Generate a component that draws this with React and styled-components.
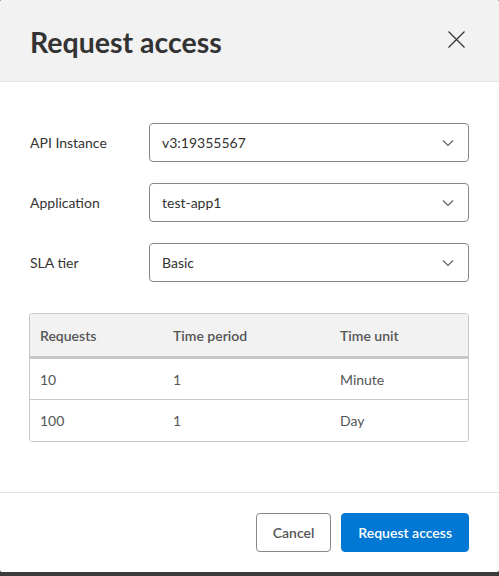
import React from "react";
import styled, { createGlobalStyle } from "styled-components";

const Global = createGlobalStyle`
  html, body { margin: 0; padding: 0; background: #3b3b3b; }
  body { font-family: Lato, "Open Sans", sans-serif; }
  * { box-sizing: border-box; }
`;

const Dialog = styled.div`
  width: 499px;
  height: 572px;
  background: #fff;
  border-radius: 2px;
  display: flex;
  flex-direction: column;
  overflow: hidden;
`;

const Header = styled.div`
  height: 82px;
  background: #f2f2f2;
  border-bottom: 1px solid #e1e1e1;
  display: flex;
  align-items: center;
  justify-content: space-between;
  padding: 0 34px 0 30px;
`;

const Title = styled.h2`
  margin: 0;
  margin-top: 2px;
  font-size: 28.5px;
  font-weight: 700;
  color: #333;
`;

const CloseButton = styled.button`
  border: none;
  background: transparent;
  padding: 0;
  width: 17px;
  height: 17px;
  display: flex;
  cursor: pointer;
  margin-top: -3px;
`;

const Body = styled.div`
  flex: 1;
  padding: 41px 30px 0 30px;
  display: flex;
  flex-direction: column;
`;

const Form = styled.div`
  display: grid;
  grid-template-columns: 119px 1fr;
  row-gap: 21px;
  align-items: center;
`;

const Label = styled.label`
  font-size: 14px;
  color: #333;
`;

const Select = styled.div`
  height: 39px;
  border: 1px solid #8a8886;
  border-radius: 4px;
  display: flex;
  align-items: center;
  justify-content: space-between;
  padding: 0 14px 0 12px;
  font-size: 14px;
  color: #323130;
`;

const Table = styled.div`
  margin-top: 31px;
  margin-left: -1px;
  border: 1px solid #c8c8c8;
  border-radius: 3px;
  overflow: hidden;
`;

const Row = styled.div`
  display: grid;
  grid-template-columns: 133px 167px 1fr;
  height: ${(p) => (p.$head ? "45px" : "41px")};
  background: ${(p) => (p.$head ? "#f2f2f2" : "#fff")};
  border-bottom: ${(p) => (p.$head ? "3px solid #c8c8c8" : p.$last ? "none" : "1px solid #c8c8c8")};
  align-items: center;
`;

const Cell = styled.div`
  padding-left: 10px;
  font-size: 14px;
  font-weight: ${(p) => (p.$head ? 600 : 400)};
  color: #555;
`;

const Footer = styled.div`
  border-top: 1px solid #e1e1e1;
  padding: 20px 30px 20px;
  display: flex;
  justify-content: flex-end;
  gap: 10px;
`;

const Button = styled.button`
  height: 39px;
  padding: 0 16px;
  min-width: ${(p) => (p.$primary ? "127px" : "74px")};
  border-radius: 4px;
  font-family: inherit;
  font-size: 14px;
  font-weight: 600;
  cursor: pointer;
  border: 1px solid ${(p) => (p.$primary ? "#0078d4" : "#8a8886")};
  background: ${(p) => (p.$primary ? "#0078d4" : "#fff")};
  color: ${(p) => (p.$primary ? "#fff" : "#555")};
`;

const Chevron = () => (
  <svg width="12" height="8" viewBox="0 0 12 8" fill="none">
    <path d="M1 1.5 L6 6.5 L11 1.5" stroke="#605e5c" strokeWidth="1.1" />
  </svg>
);

const fields = [
  ["API Instance", "v3:19355567"],
  ["Application", "test-app1"],
  ["SLA tier", "Basic"],
];

const rows = [
  ["10", "1", "Minute"],
  ["100", "1", "Day"],
];

export default function App() {
  return (
    <>
      <Global />
      <Dialog>
        <Header>
          <Title>Request access</Title>
          <CloseButton aria-label="Close">
            <svg width="17" height="17" viewBox="0 0 17 17">
              <path d="M0.5 0.5 L16.5 16.5 M16.5 0.5 L0.5 16.5" stroke="#333" strokeWidth="1.2" />
            </svg>
          </CloseButton>
        </Header>
        <Body>
          <Form>
            {fields.map(([l, v]) => (
              <React.Fragment key={l}>
                <Label>{l}</Label>
                <Select>
                  <span>{v}</span>
                  <Chevron />
                </Select>
              </React.Fragment>
            ))}
          </Form>
          <Table>
            <Row $head>
              <Cell $head>Requests</Cell>
              <Cell $head>Time period</Cell>
              <Cell $head>Time unit</Cell>
            </Row>
            {rows.map((r, i) => (
              <Row key={i} $last={i === rows.length - 1}>
                {r.map((c, j) => (
                  <Cell key={j}>{c}</Cell>
                ))}
              </Row>
            ))}
          </Table>
        </Body>
        <Footer>
          <Button>Cancel</Button>
          <Button $primary>Request access</Button>
        </Footer>
      </Dialog>
    </>
  );
}
